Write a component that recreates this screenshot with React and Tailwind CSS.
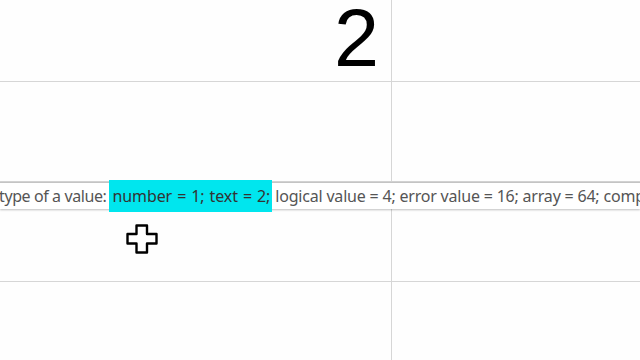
import React from 'react';

const Cursor = () => (
  <svg width="32" height="30" viewBox="0 0 32 30" className="absolute left-[126px] top-[224px]">
    <path
      d="M10.5 1.5h10.5v8.5h9.5v9.5H21v9H10.5v-9H1.5V10h9z"
      fill="#fff"
      stroke="#000"
      strokeWidth="2.4"
      strokeLinejoin="round"
    />
  </svg>
);

const App = () => {
  return (
    <div className="relative w-[640px] h-[360px] overflow-hidden bg-[#fefefe]">
      {/* Sheet grid */}
      <div className="grid grid-cols-[392px_1fr] grid-rows-[82px_100px_100px_1fr] h-full">
        <div className="border-r border-b border-[#d6d6d6] flex items-start justify-end pr-[12px]">
          <span className="text-[81px] leading-[1.1] mt-[-6px] text-black font-['Liberation_Sans',Arial,sans-serif]">2</span>
        </div>
        <div className="border-b border-[#d6d6d6]"></div>
        <div className="border-r border-b border-[#d6d6d6]"></div>
        <div className="border-b border-[#d6d6d6]"></div>
        <div className="border-r border-b border-[#d6d6d6]"></div>
        <div className="border-b border-[#d6d6d6]"></div>
        <div className="border-r border-[#d6d6d6]"></div>
        <div></div>
      </div>

      {/* Function argument tooltip */}
      <div className="absolute left-0 right-0 top-[182px] h-[27px] bg-white border-t border-[#c4c4c4] shadow-[0_1px_2px_rgba(0,0,0,0.25)] flex items-center whitespace-nowrap font-['Noto_Sans','Open_Sans',sans-serif] text-[16px] text-[#555] tracking-[-0.1px]">
        <span className="ml-[-1px] tracking-[-0.4px]">type of a value:</span>
        <span className="ml-[3px] bg-[#00e6ee] text-[#333] pl-[3px] pr-[2px] py-[8px] leading-none [word-spacing:1px]">number = 1; text = 2;</span>
        <span className="ml-[3px] tracking-[-0.2px]">logical value = 4; error value = 16; array = 64; comp</span>
      </div>

      <Cursor />
    </div>
  );
};

export default App;
